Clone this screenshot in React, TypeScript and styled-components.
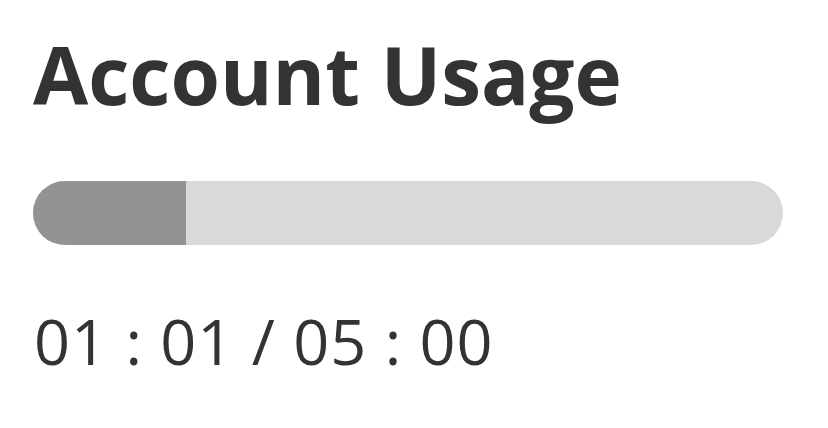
import styled, { createGlobalStyle } from "styled-components";

const GlobalStyle = createGlobalStyle`
  html, body {
    margin: 0;
    padding: 0;
    background: #ffffff;
  }
  body {
    font-family: "Open Sans", "Noto Sans", sans-serif;
  }
`;

const UsageCard = styled.section`
  display: flex;
  flex-direction: column;
  padding: 26px 45px 0 33px;
  width: 828px;
  height: 428px;
  box-sizing: border-box;
`;

const Title = styled.h1`
  margin: 0 0 59px 0;
  font-size: 80px;
  line-height: 1.2;
  font-weight: 700;
  color: #333333;
`;

const Track = styled.div`
  width: 750px;
  height: 64px;
  border-radius: 32px;
  background: #d9d9d9;
  overflow: hidden;
  display: flex;
`;

const Fill = styled.div`
  height: 100%;
  background: #939393;
`;

const TimeLabel = styled.p`
  margin: 58px 0 0 1px;
  font-size: 63px;
  line-height: 1.2;
  font-weight: 400;
  letter-spacing: 1px;
  color: #333333;
`;

const used = 61;
const total = 300;

const fmt = (mins: number) => {
  const h = String(Math.floor(mins / 60)).padStart(2, "0");
  const m = String(mins % 60).padStart(2, "0");
  return `${h} : ${m}`;
};

export default function App() {
  return (
    <>
      <GlobalStyle />
      <UsageCard>
        <Title>Account Usage</Title>
        <Track>
          <Fill style={{ width: `${(used / total) * 100}%` }} />
        </Track>
        <TimeLabel>
          {fmt(used)} / {fmt(total)}
        </TimeLabel>
      </UsageCard>
    </>
  );
}
